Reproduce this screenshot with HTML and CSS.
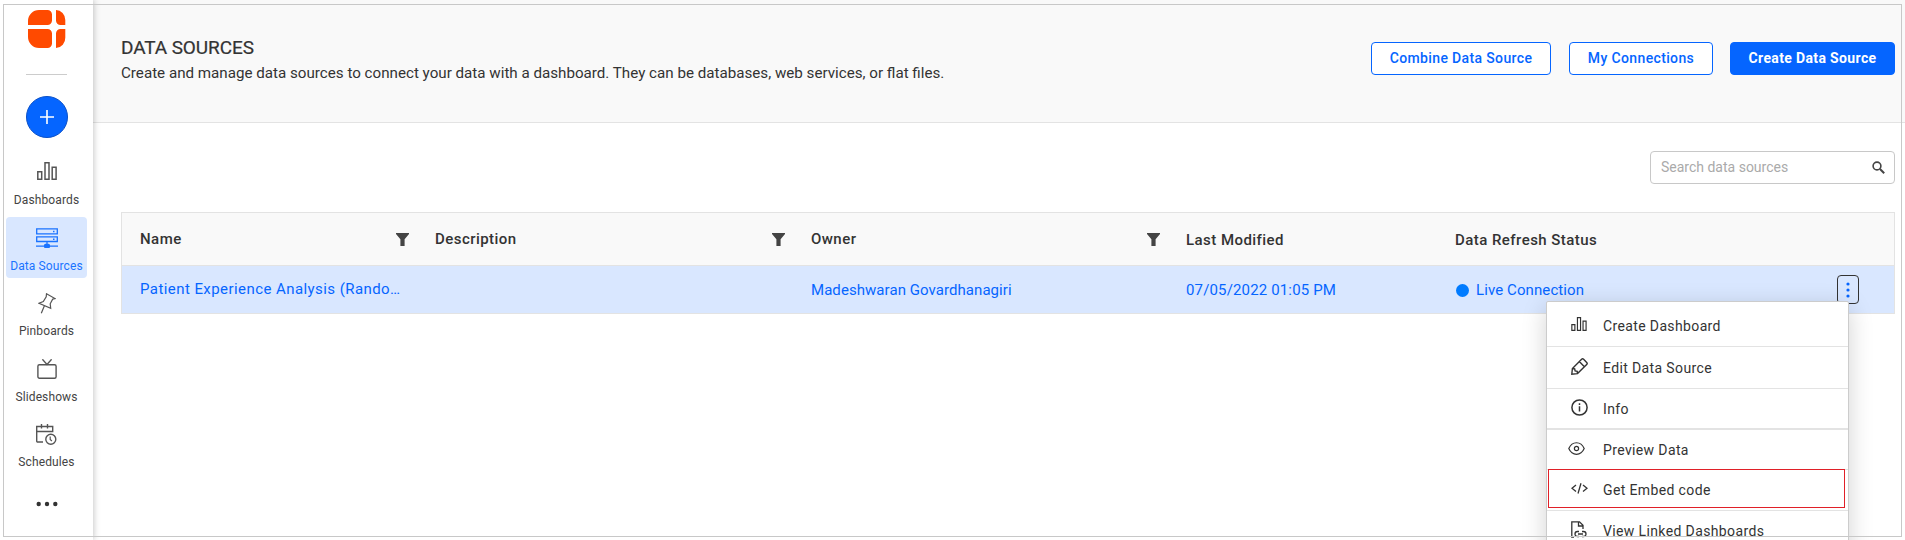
FILE: index.html
```
<!DOCTYPE html>
<html lang="en">
<head>
<meta charset="utf-8">
<title>Data Sources</title>
<link rel="stylesheet" href="styles.css">
</head>
<body>
<svg width="0" height="0" class="defs">
  <symbol id="bars" viewBox="0 0 20 18"><path d="M.8 9.8h3.9v7.4H.8zM8 .8h4v16.4H8zM15.2 5.3h3.9v11.9h-3.9z" fill="none" stroke="currentColor" stroke-width="1.5"/></symbol>
  <symbol id="funnel" viewBox="0 0 13 13"><path d="M0 0h13v1L8.6 6.2V13H4.4V6.2L0 1z" fill="currentColor"/></symbol>
</svg>
<div class="app">
  <nav class="sidebar">
    <svg class="logo" width="38" height="38" viewBox="0 0 38 38" fill="#ff4a00"><path d="M11 0h8.500a4.500 4.500 0 0 1 4.500 4.500v6a4.500 4.500 0 0 1-4.500 4.500H0v-4A11 11 0 0 1 11 0zM28 0a9.500 10 0 0 1 9.300 10v5H32.500a4.500 4.500 0 0 1-4.500-4.500zM0 19h19.500a4.500 4.500 0 0 1 4.500 4.500v10a4.500 4.500 0 0 1-4.500 4.500H11A11 11 0 0 1 0 27zM32.500 19h4.800v8.500A10 10 0 0 1 28 38V23.500a4.500 4.500 0 0 1 4.500-4.500z"/></svg>
    <div class="divider"></div>
    <button class="add" aria-label="Add"><svg width="16" height="16" viewBox="0 0 16 16"><path d="M8 1v14M1 8h14" stroke="#fff" stroke-width="1.600"/></svg></button>
    <a class="item"><svg width="20" height="18"><use href="#bars"/></svg><span>Dashboards</span></a>
    <a class="item active"><svg width="22" height="20" viewBox="0 0 22 20" fill="none" stroke="currentColor" stroke-width="1.300"><path d="M.7.9h20.600v5H.7zM.7 8.900h20.600v4.600H.7zM11 13.500v3M0 18.100h22"/><path d="M17 3.400h1.500M17 11.200h1.500" stroke-width="1.500"/><rect x="8.600" y="16.500" width="4.800" height="3" rx="1" fill="currentColor"/></svg><span>Data Sources</span></a>
    <a class="item"><svg class="pin" width="18" height="21" viewBox="0 0 18 21" fill="none" stroke="currentColor" stroke-width="1.200"><path d="M8.500.8 17 5.600l-2.300.5-2.500 4.700.5 4.600L1 10.300l4.300-1.700 2.900-4.800zM6.500 12.500 3.300 20.300"/></svg><span>Pinboards</span></a>
    <a class="item"><svg width="20" height="20" viewBox="0 0 20 20" fill="none" stroke="currentColor" stroke-width="1.400"><rect x=".9" y="5.700" width="18.200" height="13.600" rx="1.500"/><path d="M5.400.3 10 5.500 14.600.3"/></svg><span>Slideshows</span></a>
    <a class="item"><svg width="21" height="21" viewBox="0 0 21 21" fill="none" stroke="currentColor" stroke-width="1.400"><path d="M7 18H1.700a1 1 0 0 1-1-1V2.500h16v5H.8M5.500 0v4.500M11.500 0v4.500"/><circle cx="14.800" cy="15.300" r="5"/><path d="M14.200 12.500v3l1.700 1.500" stroke-width="1.200"/></svg><span>Schedules</span></a>
    <svg class="more" width="22" height="6" viewBox="0 0 22 6" fill="#333"><circle cx="2.700" cy="3" r="2.200"/><circle cx="11" cy="3" r="2.200"/><circle cx="19.300" cy="3" r="2.200"/></svg>
  </nav>
  <main class="main">
    <header class="header">
      <div class="heading">
        <h1>DATA SOURCES</h1>
        <p>Create and manage data sources to connect your data with a dashboard. They can be databases, web services, or flat files.</p>
      </div>
      <div class="actions">
        <button class="btn combine">Combine Data Source</button>
        <button class="btn connections">My Connections</button>
        <button class="btn primary">Create Data Source</button>
      </div>
    </header>
    <div class="search"><span>Search data sources</span><svg width="13" height="13" viewBox="0 0 13 13" fill="none" stroke="#444"><circle cx="5" cy="5" r="3.900" stroke-width="1.600"/><path d="m8 8 4.200 4.200" stroke-width="2"/></svg></div>
    <section class="table">
      <div class="row head">
        <div class="cell"><span>Name</span><svg width="13" height="13"><use href="#funnel"/></svg></div>
        <div class="cell"><span>Description</span><svg width="13" height="13"><use href="#funnel"/></svg></div>
        <div class="cell"><span>Owner</span><svg width="13" height="13"><use href="#funnel"/></svg></div>
        <div class="cell low"><span>Last Modified</span></div>
        <div class="cell low"><span>Data Refresh Status</span></div>
        <div class="cell"></div>
      </div>
      <div class="row data">
        <div class="cell name"><span>Patient Experience Analysis (Rando…</span></div>
        <div class="cell"></div>
        <div class="cell owner"><span>Madeshwaran Govardhanagiri</span></div>
        <div class="cell date"><span>07/05/2022 01:05 PM</span></div>
        <div class="cell live"><i class="dot"></i><span>Live Connection</span></div>
        <div class="cell"><button class="kebab" aria-label="Options"><svg width="4" height="16" viewBox="0 0 4 16" fill="#0565ff"><circle cx="2" cy="2" r="1.600"/><circle cx="2" cy="8" r="1.600"/><circle cx="2" cy="14" r="1.600"/></svg></button></div>
      </div>
    </section>
  </main>
</div>
<div class="menu">
  <div class="option m1"><svg width="16" height="14"><use href="#bars"/></svg><span>Create Dashboard</span></div>
  <div class="option m2"><svg width="17" height="17" viewBox="0 0 17 17" fill="none" stroke="currentColor" stroke-width="1.400"><path d="M.8 16.200 1.400 10.500 10.600 1.300q1-1 2 0l3.100 3.100q1 1 0 2L6.500 15.600zM1.400 10.500l2.300.3.400 2.100 2.100.4.300 2.300M8.300 3.600l5.100 5.100"/></svg><span>Edit Data Source</span></div>
  <div class="option m3"><svg width="17" height="17" viewBox="0 0 17 17" fill="none" stroke="currentColor" stroke-width="1.500"><circle cx="8.500" cy="8.500" r="7.600"/><path d="M8.500 7.200v5.300M8.500 4.200v1.700"/></svg><span>Info</span></div>
  <div class="option m4"><svg width="17" height="13" viewBox="0 0 17 13" fill="none" stroke="currentColor" stroke-width="1.200"><path d="M.8 6.500C4.200-1.200 12.800-1.200 16.200 6.500 12.800 14.200 4.200 14.200.8 6.500z"/><circle cx="8.500" cy="6.500" r="2.100"/></svg><span>Preview Data</span></div>
  <div class="option m5"><svg width="17" height="11" viewBox="0 0 17 11" fill="none" stroke="currentColor" stroke-width="1.300"><path d="M5 2 1 5.300l4 3.300M12 2l4 3.300-4 3.300M10 .3 7 10.500"/></svg><span>Get Embed code</span></div>
  <div class="option m6"><svg width="16" height="17" viewBox="0 0 16 17" fill="none" stroke="currentColor" stroke-width="1.300"><path d="M3 16H.8V.8h7.700L12 4.300V8M7.500 1v4H12"/><path d="M8 10.500H6.500a2.500 2.500 0 0 0 0 5H8M11 10.500h1.500a2.500 2.500 0 0 1 0 5H11M7 13h5"/></svg><span>View Linked Dashboards</span></div>
  <div class="highlight"></div>
</div>
<div class="frame"></div>
</body>
</html>
```
FILE: styles.css
```
* { box-sizing: border-box; }
body { margin: 0; width: 1905px; height: 540px; overflow: hidden; position: relative; background: #fff; color: #333; font-family: Roboto, sans-serif; }
h1, p { margin: 0; font-weight: 400; }
button { font-family: inherit; padding: 0; }
span, h1, p { white-space: nowrap; }
svg { display: block; flex: none; }
.defs { position: absolute; }
.app { display: flex; height: 540px; }

.sidebar { width: 93px; flex: none; background: #fff; box-shadow: 0 0 7px rgba(0,0,0,.28); display: flex; flex-direction: column; align-items: center; padding-top: 10px; z-index: 1; }
.divider { width: 41px; height: 1px; background: #ccc; margin-top: 26px; }
.add { width: 42px; height: 42px; border-radius: 50%; background: #0565ff; border: 1px solid #0a50c8; margin: 21px 0 13px 1px; display: flex; align-items: center; justify-content: center; }
.item { width: 81px; height: 61px; margin-bottom: 4.500px; display: flex; flex-direction: column; align-items: center; justify-content: space-between; padding: 11px 0 5px; color: #555; font-size: 12px; line-height: 14px; letter-spacing: .12px; border-radius: 4px; }
.item span { color: #444; }
.active, .item.active span { background: #d9e7ff; color: #1a73ff; }
.more { margin-top: 22px; }

.main { flex: 1; min-width: 0; display: flex; flex-direction: column; }
.header { height: 123px; flex: none; background: #f9f9f9; border-bottom: 1px solid #e3e3e3; display: flex; justify-content: space-between; padding: 36px 10px 0 28px; }
h1 { font-size: 19px; line-height: 24px; letter-spacing: -.1px; -webkit-text-stroke: .2px #333; }
.heading p { font-size: 15.160px; line-height: 20px; margin-top: 3px; }
.actions { display: flex; padding-top: 6px; }
.btn { height: 33px; border: 1px solid #0565ff; border-radius: 4px; background: #fff; color: #0565ff; font-size: 14px; font-weight: 500; letter-spacing: .36px; padding-bottom: 1px; }
.combine { width: 180px; margin-right: 18px; }
.connections { width: 144px; margin-right: 17px; }
.primary { width: 165px; background: #0565ff; color: #fff; font-weight: 700; }
.search { align-self: flex-end; width: 245px; height: 33px; margin: 28px 10px 0 0; padding: 0 9px 1px 10px; border: 1px solid #c8c8c8; border-radius: 4px; display: flex; align-items: center; justify-content: space-between; font-size: 14px; color: #aaa; }

.table { margin: 28px 10px 0 28px; border: 1px solid #e3e3e3; }
.row { display: grid; grid-template-columns: 295px 376px 375px 269px 382px 1fr; padding-left: 18px; }
.head { height: 53px; background: #f9f9f9; border-bottom: 1px solid #e3e3e3; font-size: 15px; font-weight: 500; letter-spacing: .45px; }
.cell { display: flex; align-items: center; }
.head .cell { justify-content: space-between; padding-right: 26px; }
.head .cell svg { color: #444; }
.head .cell span { padding-bottom: 1px; }
.low { padding-top: 3px; }
.data { height: 47px; background: #d9e7ff; color: #0565ff; font-size: 15px; letter-spacing: .1px; }
.name { letter-spacing: .43px; padding-bottom: 2px; }
.date { letter-spacing: .15px; }
.owner { letter-spacing: .06px; }
.dot { width: 13px; height: 13px; border-radius: 50%; background: #007bff; margin: 1px 7px 0 1px; }
.kebab { width: 22px; height: 29px; border: 1px solid #333; border-radius: 4px; background: transparent; display: flex; align-items: center; justify-content: center; }

.menu { position: absolute; left: 1546px; top: 301px; width: 303px; height: 260px; background: #fff; border: 1px solid #ccc; border-radius: 2px; box-shadow: 0 6px 24px rgba(0,0,0,.18); z-index: 2; font-size: 14px; letter-spacing: .37px; }
.option { display: flex; align-items: center; padding: 0 0 3px 24px; border-bottom: 1px solid #e3e3e3; }
.option svg { margin-right: auto; }
.option span { width: 245px; flex: none; padding-top: 3px; }
.m1 { height: 45px; padding-bottom: 0; } .m2 { height: 42px; } .m3 { height: 41px; border-bottom-width: 2px; } .m4 { height: 40px; padding-left: 21px; } .m5 { height: 41px; } .m6 { height: 41px; }
.highlight { position: absolute; left: 1px; top: 167px; width: 297px; height: 39px; border: 1px solid #e02028; }
.frame { position: absolute; left: 3px; top: 4px; width: 1899px; height: 533px; border: 1px solid #c8c8c8; z-index: 3; pointer-events: none; }
```
